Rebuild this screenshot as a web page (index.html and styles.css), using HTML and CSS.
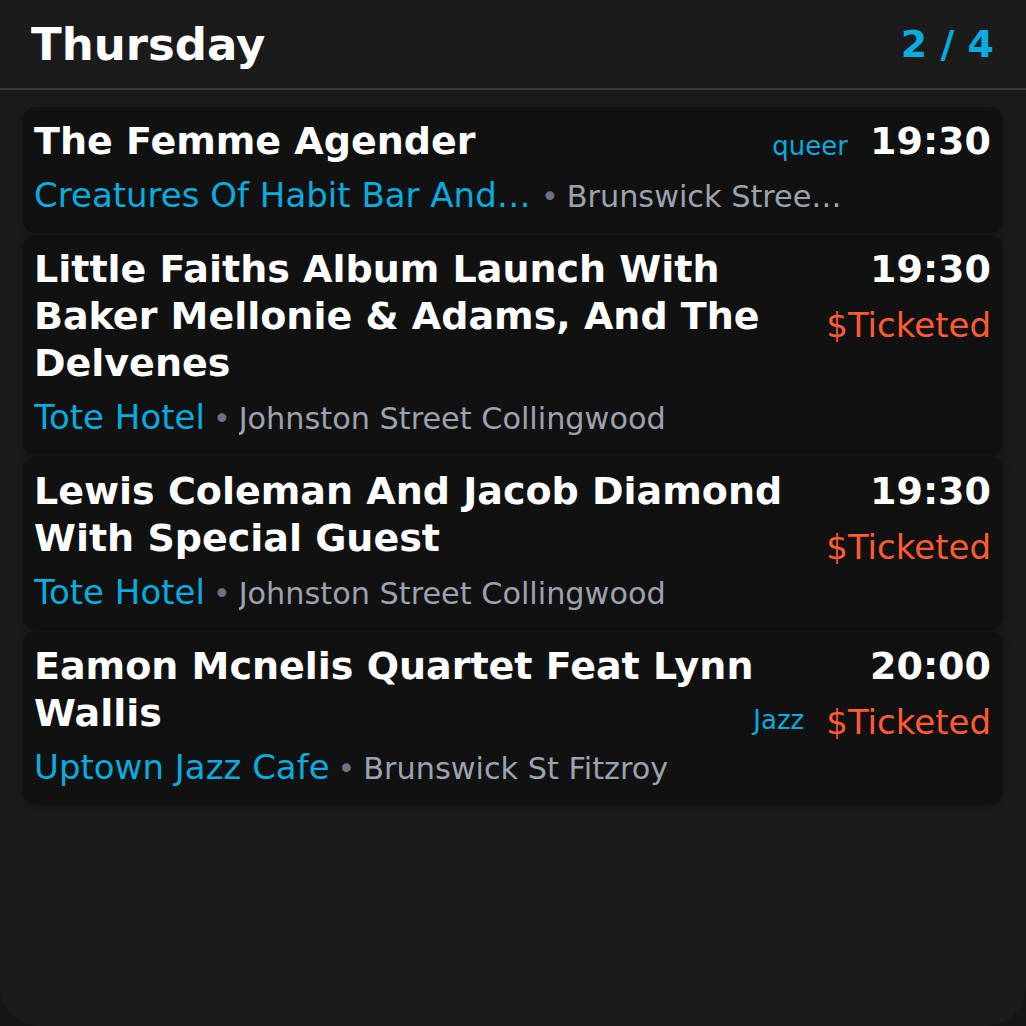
FILE: index.html
```html
<!DOCTYPE html>
<html lang="en">
<head>
<meta charset="utf-8">
<title>Thursday gigs</title>
<link rel="stylesheet" href="styles.css">
</head>
<body>
<div class="widget">
  <header class="head">
    <h1 class="day">Thursday</h1>
    <span class="count">2 / 4</span>
  </header>
  <div class="list">
    <article class="card">
      <div class="top">
        <h2 class="title">The Femme Agender</h2>
        <div class="meta">
          <div class="meta-row"><span class="tag tag-time">queer</span><span class="time">19:30</span></div>
        </div>
      </div>
      <div class="where"><span class="venue venue-limit">Creatures Of Habit Bar And Kitchen</span><span class="dot">•</span><span class="addr">Brunswick Street Fitzroy</span></div>
    </article>
    <article class="card">
      <div class="top">
        <h2 class="title">Little Faiths Album Launch With Baker Mellonie &amp; Adams, And The Delvenes</h2>
        <div class="meta">
          <div class="meta-row"><span class="time">19:30</span></div>
          <div class="meta-row"><span class="price">$Ticketed</span></div>
        </div>
      </div>
      <div class="where"><span class="venue">Tote Hotel</span><span class="dot">•</span><span class="addr">Johnston Street Collingwood</span></div>
    </article>
    <article class="card">
      <div class="top">
        <h2 class="title">Lewis Coleman And Jacob Diamond With Special Guest</h2>
        <div class="meta">
          <div class="meta-row"><span class="time">19:30</span></div>
          <div class="meta-row"><span class="price">$Ticketed</span></div>
        </div>
      </div>
      <div class="where"><span class="venue">Tote Hotel</span><span class="dot">•</span><span class="addr">Johnston Street Collingwood</span></div>
    </article>
    <article class="card">
      <div class="top">
        <h2 class="title">Eamon Mcnelis Quartet Feat Lynn Wallis</h2>
        <div class="meta">
          <div class="meta-row"><span class="time">20:00</span></div>
          <div class="meta-row"><span class="tag tag-price">Jazz</span><span class="price">$Ticketed</span></div>
        </div>
      </div>
      <div class="where"><span class="venue">Uptown Jazz Cafe</span><span class="dot">•</span><span class="addr">Brunswick St Fitzroy</span></div>
    </article>
  </div>
</div>
</body>
</html>
```

FILE: styles.css
```css
* { box-sizing: border-box; }

html, body {
  margin: 0;
  padding: 0;
  background: #161616;
}

body {
  font-family: "DejaVu Sans", "Liberation Sans", sans-serif;
  color: #ffffff;
}

.widget {
  width: 1026px;
  height: 1026px;
  background: #1b1b1b;
  border-radius: 0 0 40px 40px;
  overflow: hidden;
}

.head {
  height: 90px;
  display: flex;
  align-items: center;
  justify-content: space-between;
  padding: 0 32px 0 31px;
  border-bottom: 2px solid #343a46;
}

.day {
  margin: 0;
  font-size: 45px;
  line-height: 1;
  font-weight: 700;
  color: #ffffff;
}

.count {
  font-size: 38px;
  line-height: 1;
  font-weight: 700;
  color: #08acdf;
}

.list {
  display: flex;
  flex-direction: column;
  gap: 2px;
  padding: 17px 23px 0;
}

.card {
  background: #111111;
  border-radius: 13px;
  padding: 11px 12px 14px 11px;
  box-shadow: 0 2px 10px rgba(0, 0, 0, 0.25);
}

.top {
  display: flex;
  align-items: flex-start;
  gap: 16px;
}

.title {
  flex: 1 1 auto;
  min-width: 0;
  margin: 0;
  font-size: 38px;
  line-height: 47px;
  font-weight: 700;
  color: #ffffff;
}

.meta {
  flex: 0 0 auto;
  display: flex;
  flex-direction: column;
  align-items: flex-end;
  gap: 10px;
  margin-bottom: -10px;
}

.meta-row {
  position: relative;
  display: flex;
  align-items: baseline;
}

.time {
  font-size: 38px;
  line-height: 47px;
  font-weight: 700;
  color: #ffffff;
}

.price {
  font-size: 34px;
  line-height: 44px;
  color: #ff5a36;
}

.tag {
  position: absolute;
  right: calc(100% + 22px);
  font-size: 26px;
  line-height: 1;
  white-space: nowrap;
  color: #08acdf;
}

.tag-time {
  bottom: 6px;
}

.tag-price {
  bottom: 11px;
}

.where {
  display: flex;
  align-items: baseline;
  max-width: 812px;
  margin-top: 8px;
  line-height: 44px;
  white-space: nowrap;
}

.venue {
  flex: 0 0 auto;
  font-size: 34px;
  color: #08acdf;
  overflow: hidden;
  text-overflow: ellipsis;
}

.venue-limit {
  max-width: 499px;
}

.dot {
  flex: 0 0 auto;
  margin: 0 8px;
  font-size: 30px;
  color: #6b7280;
}

.addr {
  flex: 0 1 auto;
  min-width: 0;
  font-size: 30.3px;
  color: #9ca3af;
  overflow: hidden;
  text-overflow: ellipsis;
}
```
